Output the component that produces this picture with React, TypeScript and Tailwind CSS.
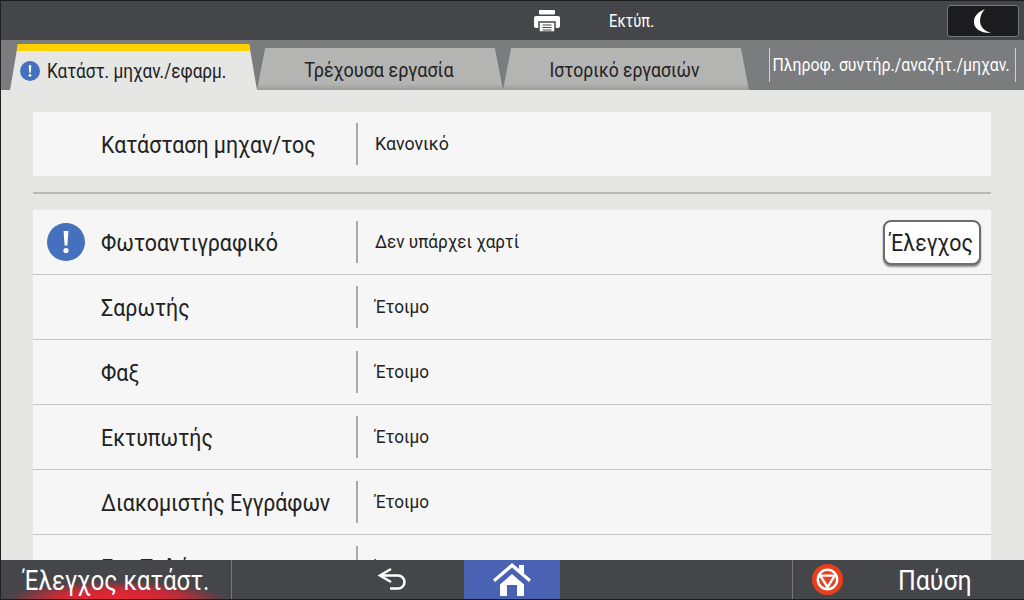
const rows = [
  { name: 'Φωτοαντιγραφικό', status: 'Δεν υπάρχει χαρτί', alert: true },
  { name: 'Σαρωτής', status: 'Έτοιμο' },
  { name: 'Φαξ', status: 'Έτοιμο' },
  { name: 'Εκτυπωτής', status: 'Έτοιμο' },
  { name: 'Διακομιστής Εγγράφων', status: 'Έτοιμο' },
  { name: 'Εφ. Πελάτη', status: 'Έτοιμο' },
]

function AlertDot({ big }: { big?: boolean }) {
  return (
    <svg className={big ? 'h-[38px] w-[38px]' : 'h-5 w-5'} viewBox="0 0 38 38">
      <circle cx="19" cy="19" r="19" fill="#4470bd" />
      <path d="M16.6 8h4.8l-1 14.5h-2.8z" fill="#fff" />
      <circle cx="19" cy="27.5" r="2.6" fill="#fff" />
    </svg>
  )
}

function Row({ name, status, alert }: { name: string; status: string; alert?: boolean }) {
  return (
    <div className="flex h-[65px] shrink-0 items-center border-b border-[#c4c4c4] bg-[#f6f6f6]">
      <div className="flex w-[68px] shrink-0 pl-[14px]">{alert && <AlertDot big />}</div>
      <div className="w-[255px] shrink-0 whitespace-nowrap pt-[1px] text-[24px] text-[#222]">
        <span className="inline-block origin-left scale-x-[0.89]">{name}</span>
      </div>
      <div className="h-[42px] w-[2px] shrink-0 bg-[#a9a9a9]" />
      <div className="flex-1 pl-[17px] text-[19px] text-[#222]">
        <span className="inline-block origin-left scale-x-[0.9]">{status}</span>
      </div>
      {alert && (
        <button className="mr-[10px] h-[45px] w-[98px] whitespace-nowrap rounded-[8px] border-2 border-[#6d6d6d] bg-white pt-[1px] text-[24px] text-[#222] shadow-[0_2px_2px_rgba(0,0,0,0.45)]">
          <span className="inline-block scale-x-[0.89]">Έλεγχος</span>
        </button>
      )}
    </div>
  )
}

export default function App() {
  return (
    <div className="flex h-[600px] w-[1024px] flex-col overflow-hidden border-l border-[#222] bg-[#e6e6e4] font-['Roboto','Noto_Sans',sans-serif]">
      {/* Header */}
      <div className="flex h-[40px] shrink-0 items-center border-t border-[#1c1c1c] bg-[#45464a]">
        <div className="flex w-[559px] justify-end">
          <svg className="h-[22px] w-[26px]" viewBox="0 0 26 22">
            <rect x="5" y="0" width="16" height="4.500" rx="1" fill="#fff" />
            <rect x="0" y="6" width="26" height="12" rx="2" fill="#fff" />
            <rect x="5" y="12" width="16" height="10" fill="#fff" stroke="#45464a" strokeWidth="1.500" />
            <path d="M8.500 15h9M8.500 17.500h9M8.500 20h9" stroke="#45464a" strokeWidth="1.200" />
          </svg>
        </div>
        <span className="ml-[49px] inline-block origin-left scale-x-[0.82] text-[18px] text-white">Εκτύπ.</span>
        <div className="ml-auto mr-[5px] flex h-[32px] w-[72px] items-center justify-center rounded-[3px] border border-[#77787b] bg-[#1c1c1e]">
          <svg className="h-[24px] w-[18px]" viewBox="0 0 18 24">
            <path d="M11 0C4 3 0 7 0 13s5 11 17 11C10 22 6 17 6 12S8 3 11 0z" fill="#fff" />
          </svg>
        </div>
      </div>

      {/* Tabs */}
      <div className="flex h-[50px] shrink-0 items-end bg-[#7b7c7e] pl-[9px]">
        <div className="flex h-[46px] w-[247px] flex-col bg-[#e6e6e4] [clip-path:polygon(3.2%_0,96.8%_0,100%_100%,0_100%)]">
          <div className="h-[7px] shrink-0 bg-[#fdd000]" />
          <div className="flex flex-1 items-center pl-[10px]">
            <AlertDot />
            <span className="ml-[7px] inline-block origin-left scale-x-[0.86] whitespace-nowrap text-[20px] text-[#222]">
              Κατάστ. μηχαν./εφαρμ.
            </span>
          </div>
        </div>
        <div className="flex h-[42px] w-[246px] items-center justify-center whitespace-nowrap bg-[linear-gradient(#b4b4b2_85%,#9c9c9a)] pt-[2px] text-[20px] text-[#222] [clip-path:polygon(3.3%_0,96.7%_0,100%_100%,0_100%)]">
          <span className="-ml-[2px] inline-block scale-x-[0.9]">Τρέχουσα εργασία</span>
        </div>
        <div className="flex h-[42px] w-[246px] items-center justify-center whitespace-nowrap bg-[linear-gradient(#b4b4b2_85%,#9c9c9a)] pt-[2px] text-[20px] text-[#222] [clip-path:polygon(3.3%_0,96.7%_0,100%_100%,0_100%)]">
          <span className="-ml-[2px] inline-block scale-x-[0.877]">Ιστορικό εργασιών</span>
        </div>
        <div className="mb-[8px] ml-[20px] flex h-[34px] w-[247px] items-center justify-center whitespace-nowrap border-x border-[#cfcfcf] pt-[1px] text-[19px] text-white">
          <span className="-ml-[2px] inline-block scale-x-[0.835]">Πληροφ. συντήρ./αναζήτ./μηχαν.</span>
        </div>
      </div>

      {/* Content */}
      <div className="flex min-h-0 flex-1 flex-col overflow-hidden pl-[32px] pr-[33px] pt-[22px]">
        <div className="flex h-[64px] shrink-0 items-center bg-[#f6f6f6]">
          <div className="w-[68px] shrink-0" />
          <div className="w-[255px] shrink-0 whitespace-nowrap pt-[2px] text-[24px] text-[#222]">
            <span className="inline-block origin-left scale-x-[0.89]">Κατάσταση μηχαν/τος</span>
          </div>
          <div className="h-[42px] w-[2px] shrink-0 bg-[#a9a9a9]" />
          <div className="pl-[17px] text-[19px] text-[#222]">
            <span className="inline-block origin-left scale-x-[0.935]">Κανονικό</span>
          </div>
        </div>
        <div className="mb-[16px] mt-[16px] h-[2px] shrink-0 bg-[#b9b9b7]" />
        {rows.map((r) => (
          <Row key={r.name} {...r} />
        ))}
      </div>

      {/* Bottom bar */}
      <div className="flex h-[40px] shrink-0 items-stretch border-b border-[#1c1c1c] bg-[#45464a]">
        <div className="flex w-[231px] items-center justify-center overflow-hidden whitespace-nowrap border-r border-[#77787b] bg-[radial-gradient(ellipse_110px_18px_at_50%_100%,#ee2233_0%,#c92a38_55%,transparent_100%)] pt-[3px] text-[28px] text-white">
          <span className="inline-block scale-x-[0.865]">Έλεγχος κατάστ.</span>
        </div>
        <div className="flex w-[232px] items-center pl-[145px]">
          <svg className="h-[26px] w-[32px]" viewBox="0 0 32 26" fill="none" stroke="#fff" strokeWidth="2.500">
            <path d="M14 2 3 8.500l11 6.500" />
            <path d="M3 8.500h18a6.500 6.500 0 0 1 0 13h-8" />
          </svg>
        </div>
        <div className="flex w-[96px] items-center justify-center bg-[#4a62b4]">
          <svg className="h-[33px] w-[38px]" viewBox="0 0 38 33" fill="#fff">
            <path d="M19 0 0 16.500 2 19 19 4.500 36 19l2-2.500-7-6V2h-5v4z" />
            <path d="M7 21.500 19 11 31 21.500V33H24V22H14v11H7z" />
          </svg>
        </div>
        <div className="flex-1" />
        <div className="flex w-[232px] items-center border-l border-[#77787b]">
          <svg className="ml-[19px] h-[31px] w-[31px]" viewBox="0 0 32 32" fill="none">
            <circle cx="16" cy="16" r="16" fill="#e8401f" />
            <circle cx="16" cy="16" r="10" stroke="#fff" strokeWidth="2.500" />
            <path d="M8.500 12h15L16 24z" stroke="#fff" strokeWidth="2.500" />
          </svg>
          <span className="ml-[55px] inline-block origin-left scale-x-[0.89] pt-[3px] text-[28px] text-white">Παύση</span>
        </div>
      </div>
    </div>
  )
}
